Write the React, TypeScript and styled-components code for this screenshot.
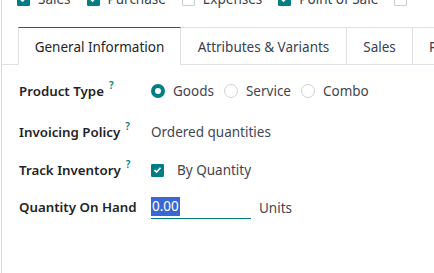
import React from "react";
import styled, { createGlobalStyle } from "styled-components";

const GlobalStyle = createGlobalStyle`
  html, body { margin: 0; padding: 0; background: #ffffff; overflow: hidden; }
  body { font-family: "Noto Sans", "Open Sans", sans-serif; font-size: 13.5px; color: #374151; }
  * { box-sizing: border-box; }
`;

const TEAL = "#017e84";

const Sheet = styled.div`
  margin-left: 1px;
  width: 433px;
  height: 273px;
  border-left: 1px solid #d8dadd;
  overflow: hidden;
`;

const TopRow = styled.div`
  display: flex;
  align-items: center;
  height: 20px;
  margin-top: -11px;
  padding-left: 15px;
  white-space: nowrap;
`;

const TopItem = styled.label<{ $mr: number }>`
  display: flex;
  align-items: center;
  gap: 8px;
  margin-right: ${(p) => p.$mr}px;
  color: #374151;
  font-size: 13.5px;
`;

const Box = styled.span<{ $checked?: boolean }>`
  display: inline-flex;
  align-items: center;
  justify-content: center;
  flex: none;
  width: 13px;
  height: 13px;
  border-radius: 1px;
  background: ${(p) => (p.$checked ? TEAL : "#ffffff")};
  border: 1px solid ${(p) => (p.$checked ? TEAL : "#c9ccd0")};
`;

const Check = () => (
  <svg width="9" height="8" viewBox="0 0 9 8">
    <path d="M1.5 4.2 L3.6 6.1 L7.5 1.8" fill="none" stroke="#fff" strokeWidth="1.6" />
  </svg>
);

const Tabs = styled.div`
  display: flex;
  align-items: flex-start;
  margin-top: 18px;
  padding-left: 16px;
  border-bottom: 1px solid #dee2e6;
  height: 38px;
  white-space: nowrap;
`;

const Tab = styled.div<{ $active?: boolean; $w?: number }>`
  flex: none;
  width: ${(p) => (p.$w ? `${p.$w}px` : "auto")};
  padding: ${(p) => (p.$w ? "0" : "0 16px")};
  height: ${(p) => (p.$active ? 38 : 37)}px;
  display: flex;
  align-items: center;
  justify-content: ${(p) => (p.$w ? "center" : "flex-start")};
  padding-top: 1px;
  font-size: 13.5px;
  color: ${(p) => (p.$active ? "#212529" : "#374151")};
  background: #fff;
  border-top: 1px solid ${(p) => (p.$active ? "#5b4559" : "#dee2e6")};
  border-left: 1px solid #dee2e6;
  border-right: ${(p) => (p.$active ? "1px solid #dee2e6" : "none")};
  margin-right: ${(p) => (p.$active ? -1 : 0)}px;
  position: relative;
  z-index: ${(p) => (p.$active ? 1 : 0)};
`;

const Form = styled.div`
  display: flex;
  flex-direction: column;
  padding-left: 17px;
`;

const Row = styled.div<{ $mt: number }>`
  display: grid;
  grid-template-columns: 132px 1fr;
  align-items: center;
  height: 24px;
  margin-top: ${(p) => p.$mt}px;
`;

const Label = styled.div`
  display: flex;
  align-items: flex-start;
  gap: 5px;
  font-weight: 600;
  color: #1f2328;
  font-size: 13.3px;
  white-space: nowrap;
`;

const Help = styled.sup`
  color: ${TEAL};
  font-size: 10px;
  font-weight: 600;
  line-height: 1;
  margin-top: -2px;
`;

const Value = styled.div`
  display: flex;
  align-items: center;
  color: #3f4550;
  font-size: 13.5px;
  white-space: nowrap;
`;

const RadioItem = styled.span`
  display: inline-flex;
  align-items: center;
  gap: 8px;
  margin-right: 10px;
`;

const Radio = styled.span<{ $checked?: boolean }>`
  flex: none;
  width: 14px;
  height: 14px;
  border-radius: 50%;
  background: #fff;
  border: ${(p) => (p.$checked ? `4px solid ${TEAL}` : "1px solid #d0d3d7")};
`;

const CheckWrap = styled.span`
  display: inline-flex;
  align-items: center;
  gap: 13px;
`;

const QtyInput = styled.div`
  width: 100px;
  height: 25px;
  border-bottom: 1px solid ${TEAL};
  display: flex;
  align-items: center;
`;

const Selected = styled.span`
  background: #3a67d1;
  color: #ffffff;
  padding: 1px 1px 2px 1px;
  line-height: 16px;
`;

const Unit = styled.span`
  margin-left: 8px;
  margin-top: 2px;
`;

export default function App() {
  return (
    <>
      <GlobalStyle />
      <Sheet>
        <TopRow>
          <TopItem $mr={16}><Box $checked><Check /></Box>Sales</TopItem>
          <TopItem $mr={16}><Box $checked><Check /></Box>Purchase</TopItem>
          <TopItem $mr={16}><Box />Expenses</TopItem>
          <TopItem $mr={16}><Box $checked><Check /></Box>Point of Sale</TopItem>
          <TopItem $mr={0}><Box /></TopItem>
        </TopRow>
        <Tabs>
          <Tab $active $w={163}>General Information</Tab>
          <Tab $w={166}>Attributes &amp; Variants</Tab>
          <Tab $w={66}>Sales</Tab>
          <Tab>Purchase</Tab>
        </Tabs>
        <Form>
          <Row $mt={14}>
            <Label>Product Type<Help>?</Help></Label>
            <Value>
              <RadioItem><Radio $checked />Goods</RadioItem>
              <RadioItem><Radio />Service</RadioItem>
              <RadioItem><Radio />Combo</RadioItem>
            </Value>
          </Row>
          <Row $mt={17}>
            <Label>Invoicing Policy<Help>?</Help></Label>
            <Value>Ordered quantities</Value>
          </Row>
          <Row $mt={14}>
            <Label>Track Inventory<Help>?</Help></Label>
            <Value>
              <CheckWrap><Box $checked><Check /></Box>By Quantity</CheckWrap>
            </Value>
          </Row>
          <Row $mt={12}>
            <Label>Quantity On Hand</Label>
            <Value>
              <QtyInput><Selected>0.00</Selected></QtyInput>
              <Unit>Units</Unit>
            </Value>
          </Row>
        </Form>
      </Sheet>
    </>
  );
}
